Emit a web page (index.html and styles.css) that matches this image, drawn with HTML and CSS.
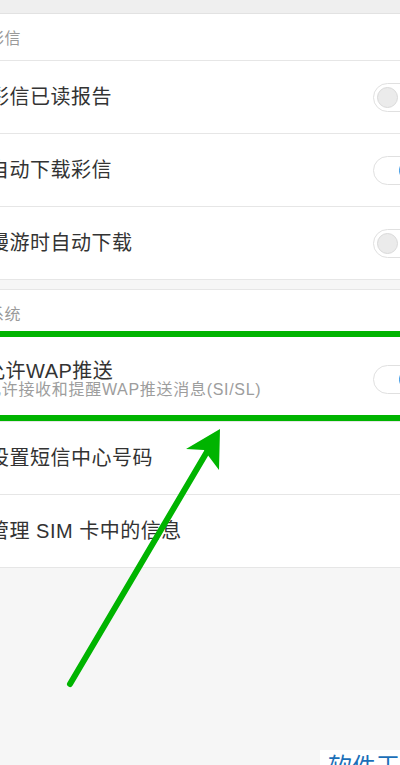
FILE: index.html
```html
<!DOCTYPE html>
<html lang="zh-CN">
<head>
  <meta charset="UTF-8">
  <meta name="viewport" content="width=device-width, initial-scale=1.0">
  <title>短信设置</title>
  <link rel="stylesheet" href="styles.css">
</head>
<body>
  <div class="page">
    <div class="screen">
      <div class="topbar"></div>

      <!-- 彩信 -->
      <div class="group">
        <div class="group-title">彩信</div>
        <div class="row">
          <span class="label">彩信已读报告</span>
          <span class="switch"><span class="knob"></span></span>
        </div>
        <div class="row">
          <span class="label">自动下载彩信</span>
          <span class="switch on"><span class="knob"></span></span>
        </div>
        <div class="row">
          <span class="label">漫游时自动下载</span>
          <span class="switch"><span class="knob"></span></span>
        </div>
      </div>

      <!-- 系统 -->
      <div class="group">
        <div class="group-title">系统</div>
        <div class="row row-tall">
          <div class="text wap">
            <div class="label">允许WAP推送</div>
            <div class="sub">允许接收和提醒WAP推送消息(SI/SL)</div>
          </div>
          <span class="switch on"><span class="knob"></span></span>
        </div>
        <div class="row">
          <span class="label">设置短信中心号码</span>
        </div>
        <div class="row">
          <span class="label">管理 SIM 卡中的信息</span>
        </div>
      </div>
    </div>

    <!-- 标注 -->
    <svg class="marks" width="400" height="765" viewBox="0 0 400 765">
      <rect x="0" y="331" width="400" height="6" fill="#00b400"/>
      <rect x="0" y="415" width="400" height="6" fill="#00b400"/>
      <line x1="70" y1="684" x2="211" y2="445" stroke="#00b400" stroke-width="6" stroke-linecap="round"/>
      <polygon points="220,429 186,449 204,450 219,470" fill="#00b400"/>
    </svg>

    <div class="watermark">软件王</div>
  </div>
</body>
</html>
```

FILE: styles.css
```css
html, body {
  margin: 0;
  padding: 0;
  height: 765px;
  overflow: hidden;
  background-color: #f6f6f6;
  font-family: "Liberation Sans", "Noto Sans CJK SC", sans-serif;
}
.page {
  position: relative;
  width: 400px;
  height: 765px;
  overflow: hidden;
}
.screen {
  width: 436px;
  margin-left: -11px;
}
.topbar {
  height: 13px;
  background-color: #efefef;
  border-bottom: 1px solid #e2e2e2;
}
.group {
  background-color: #fff;
  border-bottom: 1px solid #e6e6e6;
}
.group + .group {
  margin-top: 9px;
  border-top: 1px solid #e6e6e6;
}
.group-title {
  height: 46px;
  display: flex;
  align-items: center;
  margin-left: -1px;
  font-size: 16px;
  letter-spacing: 0.4px;
  color: #9a9a9a;
}
.row {
  height: 72px;
  display: flex;
  align-items: center;
  justify-content: space-between;
  border-top: 1px solid #e6e6e6;
}
.row-tall {
  height: 84px;
}
.label {
  font-size: 20px;
  line-height: 24px;
  letter-spacing: 0.5px;
  color: #333;
}
.text.wap {
  margin-left: -4px;
}
.sub {
  margin-top: -3px;
  font-size: 16px;
  line-height: 20px;
  letter-spacing: 0.7px;
  color: #9d9d9d;
}
.switch {
  position: relative;
  width: 50px;
  height: 27px;
  border: 1px solid #e0e0e0;
  border-radius: 15px;
  background-color: #fff;
}
.knob {
  position: absolute;
  left: 3px;
  top: 3px;
  width: 19px;
  height: 19px;
  border: 1px solid #d9d9d9;
  border-radius: 50%;
  background-color: #ebebeb;
}
.switch.on .knob {
  left: 25px;
  border-color: #3896e3;
  background-color: #4aa3ec;
}
.marks {
  position: absolute;
  left: 0;
  top: 0;
}
.watermark {
  position: absolute;
  left: 320px;
  top: 750px;
  width: 90px;
  height: 30px;
  padding: 5px 0 0 8px;
  box-sizing: border-box;
  background-color: #fff;
  font-size: 24px;
  line-height: 24px;
  color: #1b6fb8;
}
```
